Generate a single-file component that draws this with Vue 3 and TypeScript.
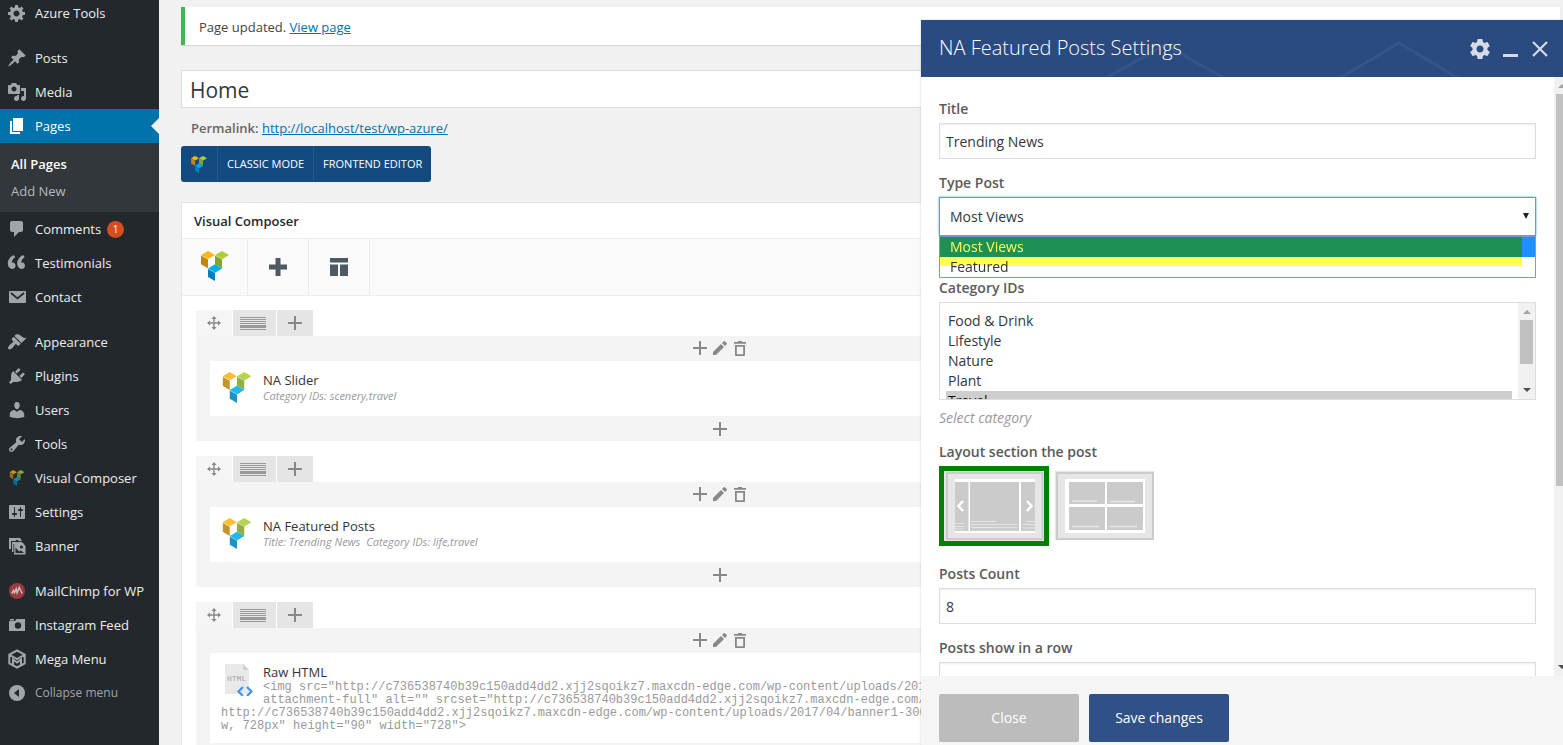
<script setup lang="ts">
import { ref } from 'vue'

interface MenuItem {
  label: string
  icon: string
  gap?: boolean
  badge?: number
  current?: boolean
  muted?: boolean
}

const paths: Record<string, string> = {
  gear: 'M18 12h-2.18c-.17.7-.44 1.35-.81 1.93l1.54 1.54-2.1 2.1-1.54-1.54c-.58.36-1.23.63-1.91.79V19H8v-2.18c-.68-.16-1.33-.43-1.91-.79l-1.54 1.54-2.12-2.12 1.54-1.54c-.36-.58-.63-1.23-.79-1.91H1V9.03h2.17c.16-.7.44-1.35.8-1.94L2.43 5.55l2.1-2.1 1.54 1.54c.58-.37 1.24-.64 1.93-.81V2h3v2.18c.68.16 1.33.43 1.91.79l1.54-1.54 2.12 2.12-1.54 1.54c.36.59.64 1.24.8 1.94H18V12zm-8.5 1.5c1.66 0 3-1.34 3-3s-1.34-3-3-3-3 1.34-3 3 1.34 3 3 3z',
  pin: 'M10.44 3.02l1.82-1.82 6.36 6.35-1.83 1.82c-1.05-.68-2.48-.57-3.41.36l-.75.75c-.92.93-1.04 2.35-.35 3.41l-1.83 1.82-2.41-2.41-2.8 2.79c-.42.42-3.38 2.71-3.8 2.29s1.86-3.39 2.28-3.81l2.79-2.79L4.1 9.36l1.83-1.82c1.05.69 2.48.57 3.4-.36l.75-.75c.93-.92 1.05-2.35.36-3.41z',
  media: 'M13 11V4c0-.55-.45-1-1-1h-1.67L9 1H5L3.67 3H2c-.55 0-1 .45-1 1v7c0 .55.45 1 1 1h10c.55 0 1-.45 1-1zM7 4.5c1.38 0 2.5 1.12 2.5 2.5S8.38 9.5 7 9.5 4.5 8.38 4.5 7 5.62 4.5 7 4.5zM14 6h5v10.5c0 1.38-1.12 2.5-2.5 2.5S14 17.88 14 16.5s1.12-2.5 2.5-2.5c.17 0 .34.02.5.05V9h-3V6zm-4 8.05V13h2v3.5c0 1.38-1.12 2.5-2.5 2.5S7 17.88 7 16.5 8.12 14 9.5 14c.17 0 .34.02.5.05z',
  page: 'M6 15V2h10v13H6zm-1 1h8v2H3V5h2v11z',
  comment: 'M5 2h9c1.1 0 2 .9 2 2v7c0 1.1-.9 2-2 2h-2l-5 5v-5H5c-1.1 0-2-.9-2-2V4c0-1.1.9-2 2-2z',
  quote: 'M8.54 12.74c0-.87-.24-1.61-.72-2.22-.73-.92-2.14-1.03-2.96-.85-.34-1.93 1.3-4.39 3.42-5.45L6.65 1.94C3.45 3.46.31 6.96.85 11.37 1.19 14.16 2.8 16 5.08 16c1 0 1.83-.29 2.48-.88.66-.59.98-1.38.98-2.38zm9.43 0c0-.87-.24-1.61-.72-2.22-.73-.92-2.14-1.03-2.96-.85-.34-1.93 1.3-4.39 3.42-5.45l-1.63-2.28c-3.2 1.52-6.34 5.02-5.8 9.43.34 2.79 1.95 4.63 4.23 4.63 1 0 1.83-.29 2.48-.88.66-.59.98-1.38.98-2.38z',
  brush: 'M14.48 11.06L7.41 3.99l1.5-1.5c.5-.56 2.3-.47 3.51.32 1.21.8 1.43 1.28 2.91 2.1 1.18.64 2.45 1.26 4.45.85zm-.71.71L6.7 4.7 4.93 6.47c-.39.39-.39 1.02 0 1.41l1.06 1.06c.39.39.39 1.03 0 1.42-.6.6-1.43 1.11-2.21 1.69-.35.26-.7.53-1.01.84C1.43 14.23.4 16.08 1.4 17.07c.99 1 2.84-.03 4.18-1.36.31-.31.58-.66.85-1.02.57-.78 1.08-1.61 1.69-2.21.39-.39 1.02-.39 1.41 0l1.06 1.06c.39.39 1.02.39 1.41 0z',
  plug: 'M13.11 4.36L9.87 7.6 8 5.73l3.24-3.24c.35-.34 1.05-.2 1.56.32.52.51.66 1.21.31 1.55zm-8 1.77l.91-1.12 9.01 9.01-1.19.84c-.71.71-2.63 1.16-3.82 1.16H6.14L4.9 17.26c-.59.59-1.54.59-2.12 0-.59-.58-.59-1.53 0-2.12l1.24-1.24v-3.88c0-1.13.4-3.19 1.09-3.89zm7.26 3.97l3.24-3.24c.34-.35 1.04-.21 1.55.31.52.51.66 1.21.31 1.55l-3.24 3.25z',
  user: 'M10 9.25c-2.27 0-2.73-3.44-2.73-3.44C7 4.02 7.82 2 9.97 2c2.16 0 2.98 2.02 2.71 3.81 0 0-.41 3.44-2.68 3.44zm0 2.57L12.72 10c2.39 0 4.52 2.33 4.52 4.53v2.49s-3.65 1.13-7.24 1.13c-3.65 0-7.24-1.13-7.24-1.13v-2.49c0-2.25 1.94-4.48 4.47-4.48z',
  wrench: 'M16.68 9.77c-1.34 1.34-3.3 1.67-4.95.99l-5.41 6.52c-.99.99-2.59.99-3.58 0s-.99-2.59 0-3.57l6.52-5.42c-.68-1.65-.35-3.61.99-4.95 1.28-1.28 3.12-1.62 4.72-1.06l-2.89 2.89 2.82 2.82 2.86-2.87c.53 1.58.18 3.39-1.08 4.65zM3.81 16.21c.4.39 1.04.39 1.43 0 .4-.4.4-1.04 0-1.43-.39-.4-1.03-.4-1.43 0-.39.39-.39 1.03 0 1.43z',
  sliders: 'M18 16V4c0-.55-.45-1-1-1H3c-.55 0-1 .45-1 1v12c0 .55.45 1 1 1h14c.55 0 1-.45 1-1zM8 11h1c.55 0 1 .45 1 1s-.45 1-1 1H8v1.5c0 .28-.22.5-.5.5s-.5-.22-.5-.5V13H6c-.55 0-1-.45-1-1s.45-1 1-1h1V5.5c0-.28.22-.5.5-.5s.5.22.5.5V11zm5-2h-1c-.55 0-1-.45-1-1s.45-1 1-1h1V5.5c0-.28.22-.5.5-.5s.5.22.5.5V7h1c.55 0 1 .45 1 1s-.45 1-1 1h-1v5.5c0 .28-.22.5-.5.5s-.5-.22-.5-.5V9z',
}

const menu: MenuItem[] = [
  { label: 'Azure Tools', icon: 'gear' },
  { label: 'Posts', icon: 'pin', gap: true },
  { label: 'Media', icon: 'media' },
  { label: 'Pages', icon: 'page', current: true },
  { label: 'Comments', icon: 'comment', badge: 1 },
  { label: 'Testimonials', icon: 'quote' },
  { label: 'Contact', icon: 'mail' },
  { label: 'Appearance', icon: 'brush', gap: true },
  { label: 'Plugins', icon: 'plug' },
  { label: 'Users', icon: 'user' },
  { label: 'Tools', icon: 'wrench' },
  { label: 'Visual Composer', icon: 'vc' },
  { label: 'Settings', icon: 'sliders' },
  { label: 'Banner', icon: 'banner' },
  { label: 'MailChimp for WP', icon: 'chimp', gap: true },
  { label: 'Instagram Feed', icon: 'camera' },
  { label: 'Mega Menu', icon: 'mega' },
  { label: 'Collapse menu', icon: 'collapse', muted: true },
]

const rows = [
  { name: 'NA Slider', params: ['Category IDs: scenery,travel'] },
  { name: 'NA Featured Posts', params: ['Title: Trending News', 'Category IDs: life,travel'] },
  { name: 'Raw HTML', html: true, params: [] as string[] },
]

const rawHtml = [
  '<img src="http://c736538740b39c150add4dd2.xjj2sqoikz7.maxcdn-edge.com/wp-content/uploads/2017/',
  'attachment-full" alt="" srcset="http://c736538740b39c150add4dd2.xjj2sqoikz7.maxcdn-edge.com/wp',
  'http://c736538740b39c150add4dd2.xjj2sqoikz7.maxcdn-edge.com/wp-content/uploads/2017/04/banner1-300x3',
  'w, 728px" height="90" width="728">',
].join('\n')

const pageTitle = ref('Home')
const title = ref('Trending News')
const typePost = ref('Most Views')
const types = ['Most Views', 'Featured']
const categories = ['Food & Drink', 'Lifestyle', 'Nature', 'Plant', 'Travel']
const chosen = ref<string[]>(['Travel'])
const layout = ref('slider')
const postsCount = ref('8')
const perRow = ref('')
</script>

<template>
  <div class="app">
    <svg class="defs" width="0" height="0" aria-hidden="true">
      <symbol id="vc-logo" viewBox="0 0 28 30">
        <path fill="#fdb515" d="M0 4l7-4 7 4-7 4z" />
        <path fill="#bd8712" d="M0 4.5l7 4v8.8l-7-4z" />
        <path fill="#abd037" d="M14 4l7-4 7 4-7 4.2z" />
        <path fill="#86a32d" d="M14 4.5l7 4v9l-7-4.2z" />
        <path fill="#00aeef" d="M7 17.4l7-4.1 7 4.2-7 4.2z" />
        <path fill="#0083bc" d="M7 18l7 4v8l-7-4z" />
      </symbol>
    </svg>

    <nav class="sidebar" aria-label="Admin menu">
      <template v-for="item in menu" :key="item.label">
        <a href="#" class="item" :class="{ gap: item.gap, current: item.current, muted: item.muted }">
          <svg v-if="paths[item.icon]" class="ico" viewBox="0 0 20 20"><path :d="paths[item.icon]" /></svg>
          <svg v-else-if="item.icon === 'mail'" class="ico" viewBox="0 0 20 20">
            <rect x="2" y="4" width="17" height="12" rx="1" />
            <path d="M4 6l6.500 5.500L17 6" fill="none" stroke="#23282d" stroke-width="1.700" />
          </svg>
          <svg v-else-if="item.icon === 'vc'" class="ico small dim" viewBox="0 0 28 30"><use href="#vc-logo" /></svg>
          <svg v-else-if="item.icon === 'banner'" class="ico" viewBox="0 0 20 20">
            <path d="M2 2h11l2 3H4v8H2z" />
            <path d="M5 6h10l2 3H7v7H5z" />
            <path d="M7 7h9l2.500 3v8.500H7z" />
            <circle cx="10" cy="5" r="1.300" fill="#23282d" />
            <circle cx="14.500" cy="11" r="1.600" fill="#23282d" />
            <path d="M4.500 5.500v8M6.800 8v9" stroke="#23282d" stroke-width=".8" fill="none" />
            <path d="M8.500 11.500l3.500 4 2-1 3 2.500H8.500z" fill="#23282d" />
          </svg>
          <svg v-else-if="item.icon === 'chimp'" class="ico" viewBox="0 0 20 20">
            <circle cx="10" cy="10" r="8" fill="#9b3a3d" />
            <path d="M4.800 12.500l1.700-3 1 2.200L9.200 8l.9 3.800L12.200 6.500l3 6" fill="none" stroke="#c9b9bb" stroke-width="1.600" />
          </svg>
          <svg v-else-if="item.icon === 'camera'" class="ico" viewBox="0 0 20 20">
            <path d="M3 4h4v1.500H3zM2 6h6l1.500-2H18v12H2z" />
            <circle cx="11" cy="10.500" r="3.200" fill="#23282d" />
          </svg>
          <svg v-else-if="item.icon === 'mega'" class="ico" viewBox="0 0 20 20">
            <path d="M10 1.500l7.700 4.200v8.600L10 18.500l-7.700-4.200V5.700zM3 6l7 4 7-4M6 15.500V10.500l4 3 4-3v5" fill="none" stroke="#a0a5aa" stroke-width="2" />
          </svg>
          <svg v-else class="ico" viewBox="0 0 20 20">
            <circle cx="10" cy="10" r="8" />
            <path d="M12 6v8l-5-4z" fill="#23282d" />
          </svg>
          <span>{{ item.label }}</span>
          <span v-if="item.badge" class="badge">{{ item.badge }}</span>
        </a>
        <div v-if="item.current" class="submenu">
          <a href="#" class="active">All Pages</a>
          <a href="#">Add New</a>
        </div>
      </template>
    </nav>

    <main class="main">
      <div class="notice">Page updated. <a href="#">View page</a></div>

      <div class="editor">
        <input v-model="pageTitle" class="page-title" type="text" aria-label="Page title" />
        <p class="permalink"><strong>Permalink:</strong> <a href="#">http://localhost/test/wp-azure/</a></p>

        <div class="modes">
          <span class="mode-logo"><svg viewBox="0 0 28 30"><use href="#vc-logo" /></svg></span>
          <button type="button">CLASSIC MODE</button>
          <button type="button">FRONTEND EDITOR</button>
        </div>

        <section class="box">
          <h2>Visual Composer</h2>
          <div class="toolbar">
            <span class="cell first"><svg width="28" height="30" viewBox="0 0 28 30"><use href="#vc-logo" /></svg></span>
            <button type="button" class="cell" aria-label="Add element">
              <svg width="18" height="18" viewBox="0 0 18 18"><path d="M6.500 0h5v6.500H18v5h-6.500V18h-5v-6.500H0v-5h6.500z" /></svg>
            </button>
            <button type="button" class="cell" aria-label="Templates">
              <svg width="18" height="18" viewBox="0 0 18 18"><path d="M0 0h18v4.500H0zM0 6.500h8V18H0zM10 6.500h8V18h-8z" /></svg>
            </button>
          </div>

          <div class="rows">
            <div v-for="row in rows" :key="row.name" class="row">
              <div class="tabs">
                <button type="button" class="tab move" aria-label="Move row">
                  <svg width="14" height="14" viewBox="0 0 14 14"><path d="M7 0l2.600 3H7.700v3.300H11V4.400L14 7l-3 2.600V7.700H7.700V11h1.900L7 14l-2.600-3h1.900V7.700H3v1.900L0 7l3-2.600v1.900h3.300V3H4.400z" /></svg>
                </button>
                <button type="button" class="tab wide" aria-label="Row layout">
                  <svg width="26" height="13" viewBox="0 0 26 13"><path d="M0 0h26v1H0zM0 2h26v1H0zM0 4h26v1H0zM0 6h26v1H0zM0 8h26v3H0zM0 12h26v1H0z" /></svg>
                </button>
                <button type="button" class="tab" aria-label="Add row">
                  <svg width="14" height="14" viewBox="0 0 14 14"><path d="M6 0h2v6h6v2H8v6H6V8H0V6h6z" /></svg>
                </button>
              </div>
              <div class="column">
                <div class="controls top">
                  <button type="button" aria-label="Add">
                    <svg width="14" height="14" viewBox="0 0 14 14"><path d="M6 0h2v6h6v2H8v6H6V8H0V6h6z" /></svg>
                  </button>
                  <button type="button" aria-label="Edit">
                    <svg width="14" height="14" viewBox="0 0 14 14"><path d="M0 14v-3l8-8 3 3-8 8zM9 2l1.700-1.700q.6-.5 1.200 0l1.800 1.800q.5.6 0 1.200L12 5z" /></svg>
                  </button>
                  <button type="button" aria-label="Delete">
                    <svg width="14" height="15" viewBox="0 0 14 15"><path fill-rule="evenodd" d="M1 1h3.500l.8-1h3.400l.8 1H13v1.700H1zM2 4h10v10q0 1-1 1H3q-1 0-1-1zM3.800 5.700v7.500h6.400V5.700z" /></svg>
                  </button>
                </div>
                <article class="card" :class="{ tall: row.html }">
                  <svg v-if="row.html" class="card-icon" viewBox="0 0 30 32">
                    <path fill="#e9e9e9" d="M3 0h18l6 6v24H3z" />
                    <path fill="#d0d0d0" d="M21 0l6 6h-6z" />
                    <text x="5" y="17" font-size="8" font-family="Liberation Mono, monospace" fill="#a5a5a5">HTML</text>
                    <path d="M21 23l-4.500 4.500L21 32M25 23l4.500 4.500L25 32" fill="none" stroke="#3d94f0" stroke-width="2.200" />
                  </svg>
                  <svg v-else class="card-icon logo" viewBox="0 0 28 30"><use href="#vc-logo" /></svg>
                  <h3>{{ row.name }}</h3>
                  <pre v-if="row.html">{{ rawHtml }}</pre>
                  <p v-else class="params"><span v-for="p in row.params" :key="p">{{ p }}</span></p>
                </article>
                <div class="controls">
                  <button type="button" aria-label="Add below">
                    <svg width="14" height="14" viewBox="0 0 14 14"><path d="M6 0h2v6h6v2H8v6H6V8H0V6h6z" /></svg>
                  </button>
                </div>
              </div>
            </div>
          </div>
        </section>
      </div>
    </main>

    <section class="panel" role="dialog" aria-labelledby="panel-title">
      <header class="panel-head">
        <svg class="pattern" width="360" height="36" viewBox="0 0 360 36" aria-hidden="true">
          <path d="M2 37l59-33 59 33M236 37l59-35 59 35" fill="none" stroke="#34558a" stroke-width="3" />
        </svg>
        <h1 id="panel-title">NA Featured Posts Settings</h1>
        <button type="button" aria-label="Settings">
          <svg width="20" height="20" viewBox="2 2 20 20"><path d="M19.430 12.980c.04-.32.07-.64.07-.98s-.03-.66-.07-.98l2.110-1.650c.19-.15.24-.42.12-.64l-2-3.460c-.12-.22-.39-.3-.61-.22l-2.490 1c-.52-.4-1.080-.73-1.690-.98l-.38-2.650C14.460 2.180 14.250 2 14 2h-4c-.25 0-.46.18-.49.42l-.38 2.650c-.61.25-1.170.59-1.690.98l-2.490-1c-.23-.09-.49 0-.61.22l-2 3.460c-.13.22-.07.49.12.64l2.110 1.650c-.04.32-.07.65-.07.98s.03.66.07.98l-2.110 1.650c-.19.15-.24.42-.12.64l2 3.460c.12.22.39.3.61.22l2.490-1c.52.4 1.080.73 1.690.98l.38 2.650c.03.24.24.42.49.42h4c.25 0 .46-.18.49-.42l.38-2.650c.61-.25 1.170-.59 1.690-.98l2.490 1c.23.09.49 0 .61-.22l2-3.460c.12-.22.07-.49-.12-.64zM12 15.500c-1.930 0-3.500-1.570-3.500-3.500s1.570-3.500 3.500-3.500 3.500 1.570 3.500 3.500-1.570 3.500-3.500 3.500z" /></svg>
        </button>
        <button type="button" aria-label="Minimize">
          <svg width="16" height="16" viewBox="0 0 16 16"><path d="M0 13h15v3H0z" /></svg>
        </button>
        <button type="button" aria-label="Close panel">
          <svg width="16" height="16" viewBox="0 0 16 16"><path d="M1 1l14 14M15 1L1 15" stroke="#d5dbe6" stroke-width="2.200" /></svg>
        </button>
      </header>

      <div class="panel-body">
        <form class="fields" @submit.prevent>
          <div class="field">
            <label for="f-title">Title</label>
            <input id="f-title" v-model="title" type="text" />
          </div>

          <div class="field open">
            <label for="f-type">Type Post</label>
            <div class="dropdown">
              <select id="f-type" v-model="typePost">
                <option v-for="t in types" :key="t">{{ t }}</option>
              </select>
              <span class="caret" aria-hidden="true"></span>
              <div class="popup" role="listbox" aria-label="Type Post options">
                <div v-for="t in types" :key="t" role="option" :aria-selected="t === typePost" :class="{ on: t === typePost }" @click="typePost = t">{{ t }}</div>
                <div class="marker"></div>
              </div>
            </div>
          </div>

          <div class="field">
            <label for="f-cats">Category IDs</label>
            <div class="listbox">
              <select id="f-cats" v-model="chosen" multiple>
                <option v-for="c in categories" :key="c">{{ c }}</option>
              </select>
              <div class="bar" aria-hidden="true"><i class="up"></i><i class="thumb"></i><i class="down"></i></div>
            </div>
            <p class="hint">Select category</p>
          </div>

          <fieldset class="field choices">
            <legend>Layout section the post</legend>
            <div class="thumbs">
              <label :class="{ picked: layout === 'slider' }">
                <input v-model="layout" type="radio" name="layout" value="slider" aria-label="Slider" />
                <svg width="100" height="70" viewBox="0 0 100 70">
                  <path fill="#e6e6e6" d="M0 0h100v70H0z" />
                  <path fill="none" stroke="#ccc" stroke-width="2" d="M3 2h95.500v66H3z" />
                  <path fill="#fff" d="M11 8h80v54H11z" />
                  <path fill="#cbcbcb" d="M11 11h13.500v49H11zM26 11h49v49H26zM77 11h14v49H77z" />
                  <path fill="none" stroke="#fff" stroke-width="2.500" d="M19 30l-4.500 5 4.500 5M83 30l4.500 5-4.500 5" />
                  <path stroke="#e4e4e4" d="M11 52.500h9M11 55.500h9M11 58h9M27 50.500h25M27 53.500h46M27 56.500h46M82 50.500h9M79 53.500h12M79 57h12" />
                </svg>
              </label>
              <label :class="{ picked: layout === 'grid' }">
                <input v-model="layout" type="radio" name="layout" value="grid" aria-label="Grid" />
                <svg width="100" height="70" viewBox="0 0 100 70">
                  <path fill="#e6e6e6" d="M0 0h99v69H0z" />
                  <path fill="none" stroke="#ccc" stroke-width="2" d="M2 2h96v66H2z" />
                  <path fill="#fff" d="M10 8h80v54H10z" />
                  <path fill="#cbcbcb" d="M14 11h36v22H14zM52 11h36v22H52zM14 36h36v23H14zM52 36h36v23H52z" />
                  <path stroke="#e8e8e8" stroke-width="1.500" d="M17 30h25M55 30.500h25M17 55.500h27M55 55.500h27" />
                </svg>
              </label>
            </div>
          </fieldset>

          <div class="field">
            <label for="f-count">Posts Count</label>
            <input id="f-count" v-model="postsCount" type="text" />
          </div>

          <div class="field">
            <label for="f-row">Posts show in a row</label>
            <input id="f-row" v-model="perRow" type="text" />
          </div>
        </form>
        <div class="scroll" aria-hidden="true"><i class="up"></i><i class="thumb"></i><i class="down"></i></div>
      </div>

      <footer class="panel-foot">
        <button type="button" class="close">Close</button>
        <button type="button" class="save">Save changes</button>
      </footer>
    </section>
  </div>
</template>

<style>
body {
  margin: 0;
  background: #f1f1f1;
}
</style>

<style scoped>
* {
  box-sizing: border-box;
}
.app {
  position: relative;
  display: flex;
  height: 100vh;
  overflow: hidden;
  font: 13px/20px "Open Sans", "Noto Sans", sans-serif;
  color: #444;
  background: #f1f1f1;
}
.defs {
  position: absolute;
}
button,
input,
select {
  font: inherit;
  margin: 0;
}
button {
  border: 0;
  padding: 0;
  background: none;
  cursor: pointer;
}
svg {
  display: block;
}
a {
  color: #0073aa;
}
h1,
h2,
h3,
p {
  margin: 0;
}

/* sidebar */
.sidebar {
  flex: none;
  width: 159px;
  margin-top: -4px;
  background: #23282d;
}
.item {
  position: relative;
  display: flex;
  align-items: center;
  gap: 8px;
  height: 34px;
  padding-left: 7px;
  font-size: 13px;
  color: #eee;
  text-decoration: none;
  white-space: nowrap;
}
.item.gap {
  margin-top: 11px;
}
.ico {
  flex: none;
  width: 20px;
  height: 20px;
  fill: #a0a5aa;
}
.ico.small {
  padding: 2px;
}
.ico.dim {
  opacity: 0.75;
}
.item.current {
  background: #0073aa;
  color: #fff;
}
.item.current .ico {
  fill: #fff;
}
.item.current::after {
  content: "";
  position: absolute;
  right: 0;
  top: 9px;
  border: 8px solid transparent;
  border-left-width: 0;
  border-right-color: #f1f1f1;
}
.item.muted {
  font-size: 12px;
  color: #a0a5aa;
}
.badge {
  margin-left: -2px;
  width: 17px;
  height: 17px;
  border-radius: 50%;
  background: #d54e21;
  color: #fff;
  font-size: 10px;
  line-height: 17px;
  text-align: center;
}
.submenu {
  padding: 8px 11px 7px;
  background: #32373c;
}
.submenu a {
  display: block;
  line-height: 27px;
  color: #b4b9be;
  text-decoration: none;
}
.submenu a.active {
  color: #fff;
  font-weight: 600;
}

/* page editor */
.main {
  flex: 1;
  min-width: 0;
  padding: 7px 3px 0 22px;
}
.notice {
  padding: 10px 14px 8px;
  border-left: 4px solid #46b450;
  background: #fff;
  box-shadow: 0 1px 1px rgba(0, 0, 0, 0.1);
}
.editor {
  margin: 25px 300px 0 0;
}
.page-title {
  display: block;
  width: 100%;
  height: 38px;
  padding: 1px 8px 0;
  border: 1px solid #ddd;
  background: #fff;
  color: #32373c;
  font-size: 21px;
}
.permalink {
  padding: 10px 10px 8px;
  color: #666;
}
.permalink strong {
  font-weight: 600;
}
.modes {
  display: inline-flex;
  height: 36px;
  border-radius: 3px;
  background: #134b80;
  vertical-align: top;
}
.mode-logo {
  display: flex;
  align-items: center;
  justify-content: center;
  width: 36px;
}
.mode-logo svg {
  width: 16px;
  height: 17px;
}
.modes button {
  padding: 0 9px;
  border-left: 1px solid #23588b;
  color: #fff;
  font-size: 11px;
}
.box {
  margin-top: 20px;
  border: 1px solid #e5e5e5;
  background: #fff;
}
.box h2 {
  padding: 8px 12px 7px;
  border-bottom: 1px solid #eee;
  color: #23282d;
  font-size: 13px;
  font-weight: 600;
  line-height: 20px;
}
.toolbar {
  display: flex;
  height: 57px;
  border-bottom: 1px solid #eee;
  background: #fafafa;
}
.cell {
  display: flex;
  align-items: center;
  justify-content: center;
  width: 61px;
  border-right: 1px solid #ececec;
  fill: #4d5a63;
}
.cell.first {
  width: 66px;
  padding-bottom: 2px;
}
.rows {
  display: flex;
  flex-direction: column;
  gap: 15px;
  padding: 14px 15px 14px 14px;
}
.tabs {
  display: flex;
  gap: 1px;
}
.tab {
  display: flex;
  align-items: center;
  justify-content: center;
  width: 36px;
  height: 26px;
  background: #e5e5e5;
  fill: #888;
}
.tab.move {
  background: #f5f5f5;
}
.tab.wide {
  width: 43px;
  padding-right: 3px;
  fill: #999;
}
.column {
  padding: 0 14px;
  border-radius: 0 2px 2px 2px;
  background: #f4f4f4;
}
.controls {
  display: flex;
  align-items: center;
  justify-content: center;
  gap: 6px;
  height: 25px;
  fill: #888;
}
.controls.top {
  padding-bottom: 1px;
}
.card {
  display: flow-root;
  min-height: 55px;
  padding: 11px 11px 10px;
  background: #fff;
}
.card.tall {
  min-height: 89px;
}
.card-icon {
  float: left;
  width: 32px;
  height: 32px;
  margin-right: 10px;
}
.card-icon.logo {
  height: 31px;
  opacity: 0.88;
}
.card h3 {
  color: #333;
  font-size: 13px;
  font-weight: 400;
  line-height: 17px;
}
.params {
  display: flex;
  gap: 6px;
  color: #999;
  font-size: 11px;
  font-style: italic;
  line-height: 14px;
}
.card pre {
  margin: 0;
  color: #999;
  font: 12px/13px "Liberation Mono", "Courier New", monospace;
}

/* settings panel */
.panel {
  position: absolute;
  top: 20px;
  right: 0;
  bottom: 0;
  display: flex;
  flex-direction: column;
  width: 642px;
  background: #fff;
  box-shadow: 0 0 2px rgba(0, 0, 0, 0.2);
  font-size: 14px;
}
.panel-head {
  position: relative;
  display: flex;
  align-items: center;
  gap: 13px;
  height: 57px;
  padding: 0 15px 0 18px;
  background: #2a4a80;
  fill: #d5dbe6;
}
.pattern {
  position: absolute;
  right: 99px;
  bottom: 0;
}
.panel-head h1 {
  position: relative;
  flex: 1;
  padding-bottom: 2px;
  color: #fff;
  font-size: 20px;
  font-weight: 300;
}
.panel-body {
  flex: 1;
  display: flex;
  min-height: 0;
  overflow: hidden;
}
.fields {
  flex: 1;
  min-width: 0;
  padding: 22px 18px 0;
}
.field {
  margin: 0 0 14px;
}
.field.open {
  margin-bottom: 42px;
}
.field > label,
.field > legend {
  display: block;
  margin-bottom: 5px;
  padding: 0;
  color: #5a5a5a;
  font-weight: 600;
  line-height: 19px;
}
.field > input {
  display: block;
  width: 100%;
  height: 36px;
  padding: 0 6px;
  border: 1px solid #ddd;
  background: #fff;
  color: #32373c;
  box-shadow: inset 0 1px 2px rgba(0, 0, 0, 0.07);
}
.dropdown {
  position: relative;
}
.dropdown select {
  display: block;
  width: 100%;
  height: 39px;
  padding: 0 10px;
  border: 1px solid #5b9dd9;
  border-radius: 0;
  outline: 0;
  background: #fff;
  color: #32373c;
  appearance: none;
  box-shadow: 0 0 2px rgba(30, 140, 190, 0.8);
}
.caret {
  position: absolute;
  right: 7px;
  top: 16px;
  border: 3px solid transparent;
  border-top: 6px solid #222;
  border-bottom-width: 0;
}
.popup {
  position: absolute;
  z-index: 1;
  top: 38px;
  left: 0;
  right: 0;
  border: 1px solid #7b9ad6;
  border-top: 2px solid #6b9ad8;
  background: #fff;
  color: #32373c;
  isolation: isolate;
}
.popup > [role="option"] {
  height: 20px;
  padding-left: 10px;
  line-height: 20px;
}
.popup > .on {
  background: #1e90ff;
  color: #fff;
}
.marker {
  position: absolute;
  top: 0;
  left: 0;
  right: 13px;
  height: 29px;
  background: #ffff55;
  mix-blend-mode: multiply;
  pointer-events: none;
}
.listbox {
  display: flex;
  height: 98px;
  overflow: hidden;
  border: 1px solid #ddd;
}
.listbox select {
  flex: 1;
  min-width: 0;
  height: 120px;
  padding: 8px 6px 0;
  border: 0;
  outline: 0;
  background: #fff;
  color: #32373c;
  scrollbar-width: none;
}
.listbox option {
  min-height: 20px;
  padding: 0 2px;
  line-height: 20px;
}
.bar,
.scroll {
  display: flex;
  flex-direction: column;
  align-items: center;
  background: #f1f1f1;
}
.bar {
  width: 17px;
}
.up,
.down {
  flex: none;
  margin: 7px 0 6px;
  border: 4px solid transparent;
}
.up {
  border-top-width: 0;
  border-bottom-color: #a3a3a3;
}
.down {
  margin: auto 0 7px;
  border-bottom-width: 0;
  border-top-color: #505050;
}
.thumb {
  width: 13px;
  height: 44px;
  background: #c1c1c1;
}
.hint {
  margin-top: 8px;
  color: #999;
  font-style: italic;
}
.choices {
  min-width: 0;
  margin-bottom: 18px;
  padding: 0;
  border: 0;
}
.thumbs {
  display: flex;
  gap: 1px;
}
.thumbs label {
  border: 5px solid transparent;
  cursor: pointer;
}
.thumbs label.picked {
  border-color: #008000;
}
.thumbs input {
  position: absolute;
  opacity: 0;
}
.scroll {
  flex: none;
  align-items: flex-start;
  width: 9px;
  overflow: hidden;
}
.scroll .up,
.scroll .down {
  margin-left: 4px;
}
.scroll .thumb {
  height: 392px;
  margin-left: 2px;
}
.panel-foot {
  flex: none;
  display: flex;
  gap: 10px;
  height: 69px;
  padding: 18px;
  background: #f5f5f5;
}
.panel-foot button {
  width: 140px;
  height: 48px;
  border-radius: 2px;
  color: #fff;
}
.close {
  background: #bcbcbc;
}
.save {
  background: #2f5188;
}
</style>
